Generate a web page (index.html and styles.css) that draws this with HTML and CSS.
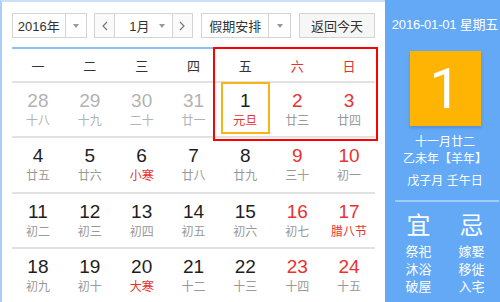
FILE: index.html
```html
<!DOCTYPE html>
<html lang="zh-CN">
<head>
    <meta charset="UTF-8">
    <title>万年历</title>
    <link rel="stylesheet" href="styles.css">
</head>
<body>

<div class="calendar">
    <div class="main">
        <div class="toolbar">
            <div class="select year">
                <span class="label">2016年</span>
                <span class="arrow"><i></i></span>
            </div>
            <div class="select month">
                <span class="nav"><svg width="6" height="10" viewBox="0 0 6 10"><path d="M5 1 L1 5 L5 9" fill="none" stroke="#777" stroke-width="1.2"/></svg></span>
                <span class="label">1月</span>
                <span class="arrow"><i></i></span>
                <span class="nav"><svg width="6" height="10" viewBox="0 0 6 10"><path d="M1 1 L5 5 L1 9" fill="none" stroke="#777" stroke-width="1.2"/></svg></span>
            </div>
            <div class="select holiday">
                <span class="label">假期安排</span>
                <span class="arrow"><i></i></span>
            </div>
            <div class="today-btn">返回今天</div>
        </div>

        <div class="grid">
            <div class="week">一</div>
            <div class="week">二</div>
            <div class="week">三</div>
            <div class="week">四</div>
            <div class="week">五</div>
            <div class="week red">六</div>
            <div class="week red">日</div>

            <div class="day other"><b>28</b><span>十八</span></div>
            <div class="day other"><b>29</b><span>十九</span></div>
            <div class="day other"><b>30</b><span>二十</span></div>
            <div class="day other"><b>31</b><span>廿一</span></div>
            <div class="day"><div class="selected"><b>1</b><span class="fest">元旦</span></div></div>
            <div class="day weekend"><b>2</b><span>廿三</span></div>
            <div class="day weekend"><b>3</b><span>廿四</span></div>

            <div class="day"><b>4</b><span>廿五</span></div>
            <div class="day"><b>5</b><span>廿六</span></div>
            <div class="day"><b>6</b><span class="fest">小寒</span></div>
            <div class="day"><b>7</b><span>廿八</span></div>
            <div class="day"><b>8</b><span>廿九</span></div>
            <div class="day weekend"><b>9</b><span>三十</span></div>
            <div class="day weekend"><b>10</b><span>初一</span></div>

            <div class="day"><b>11</b><span>初二</span></div>
            <div class="day"><b>12</b><span>初三</span></div>
            <div class="day"><b>13</b><span>初四</span></div>
            <div class="day"><b>14</b><span>初五</span></div>
            <div class="day"><b>15</b><span>初六</span></div>
            <div class="day weekend"><b>16</b><span>初七</span></div>
            <div class="day weekend"><b>17</b><span class="fest">腊八节</span></div>

            <div class="day"><b>18</b><span>初九</span></div>
            <div class="day"><b>19</b><span>初十</span></div>
            <div class="day"><b>20</b><span class="fest">大寒</span></div>
            <div class="day"><b>21</b><span>十二</span></div>
            <div class="day"><b>22</b><span>十三</span></div>
            <div class="day weekend"><b>23</b><span>十四</span></div>
            <div class="day weekend"><b>24</b><span>十五</span></div>

            <div class="highlight"></div>
        </div>
    </div>

    <div class="side">
        <div class="side-date">2016-01-01 星期五</div>
        <div class="big-day">1</div>
        <div class="lunar">十一月廿二</div>
        <div class="lunar">乙未年【羊年】</div>
        <div class="lunar ganzhi">戊子月 壬午日</div>
        <div class="side-line"></div>
        <div class="yiji">
            <div class="col">
                <div class="head">宜</div>
                <div>祭祀</div>
                <div>沐浴</div>
                <div>破屋</div>
            </div>
            <div class="col">
                <div class="head">忌</div>
                <div>嫁娶</div>
                <div>移徙</div>
                <div>入宅</div>
            </div>
        </div>
    </div>
</div>

</body>
</html>
```

FILE: styles.css
```css
body {
    margin: 0;
    font-family: "Liberation Sans", Arial, "Noto Sans CJK SC", sans-serif;
    background: #fff;
}
.calendar {
    display: flex;
    width: 500px;
    height: 302px;
    overflow: hidden;
}
.main {
    width: 385px;
    flex: none;
    box-sizing: border-box;
    padding: 11px 10px 0 10px;
    border-left: 2px solid #a9cff7;
    border-top: 2px solid #c9e0fa;
    background: #fff;
}
.toolbar {
    display: flex;
    height: 25px;
    padding-bottom: 9px;
    border-bottom: 2px solid #8ec1f6;
}
.select {
    display: flex;
    border: 1px solid #d4d4d4;
    box-sizing: border-box;
    height: 25px;
    font-size: 13px;
    color: #333;
    margin-right: 7px;
}
.select .label {
    display: flex;
    align-items: center;
    justify-content: center;
}
.select .arrow {
    display: flex;
    align-items: center;
    justify-content: center;
    border-left: 1px solid #d4d4d4;
    width: 21px;
}
.select .arrow i {
    width: 0;
    height: 0;
    border-left: 3px solid transparent;
    border-right: 3px solid transparent;
    border-top: 4px solid #999;
}
.year {
    width: 75px;
}
.year .label {
    width: 53px;
}
.month {
    width: 99px;
}
.month .label {
    width: 40px;
    padding-left: 6px;
}
.month .arrow {
    border-left: none;
    width: 10px;
}
.month .nav {
    display: flex;
    align-items: center;
    justify-content: center;
    width: 21px;
    background: #fafafa;
    border-left: 1px solid #d4d4d4;
}
.month .nav:first-child {
    border-left: none;
    border-right: 1px solid #d4d4d4;
}
.month .arrow + .nav {
    margin-left: 5px;
}
.holiday {
    width: 90px;
    margin-left: 1px;
}
.holiday .label {
    width: 68px;
}
.today-btn {
    width: 77px;
    height: 25px;
    box-sizing: border-box;
    border: 1px solid #d4d4d4;
    background: #f6f6f6;
    font-size: 13px;
    color: #333;
    display: flex;
    align-items: center;
    justify-content: center;
    margin-left: 1px;
}
.grid {
    position: relative;
    display: grid;
    grid-template-columns: repeat(7, 1fr);
    grid-template-rows: 34px repeat(4, 55.3px);
    width: 363px;
}
.week {
    display: flex;
    align-items: center;
    justify-content: center;
    font-size: 13px;
    color: #333;
    border-bottom: 2px solid #e2e2e2;
}
.week.red {
    color: #e8322f;
}
.day {
    display: flex;
    flex-direction: column;
    align-items: center;
    padding-top: 7px;
    box-sizing: border-box;
    border-bottom: 2px solid #e2e2e2;
}
.day:nth-last-child(-n+8) {
    border-bottom: none;
}
.day b {
    font-weight: normal;
    font-size: 19px;
    line-height: 22px;
    color: #1e1e1e;
}
.day span {
    font-size: 12px;
    line-height: 18px;
    color: #999;
}
.day span.fest {
    color: #e8322f;
}
.day.weekend b {
    color: #e8322f;
}
.day.other b,
.day.other span {
    color: #b3b3b3;
}
.day:has(.selected) {
    padding-top: 0;
}
.selected {
    display: flex;
    flex-direction: column;
    align-items: center;
    width: 49px;
    height: 52px;
    margin-top: -1px;
    box-sizing: border-box;
    border: 2px solid #fbb417;
    padding-top: 6px;
}
.highlight {
    position: absolute;
    left: 201px;
    top: -2px;
    width: 165px;
    height: 94px;
    box-sizing: border-box;
    border: 2px solid #f00;
}
.side {
    flex: 1;
    background: #63a9f6;
    color: #fff;
    padding-left: 5px;
    display: flex;
    flex-direction: column;
    align-items: center;
}
.side-date {
    font-size: 13px;
    letter-spacing: -0.2px;
    margin-top: 17px;
    line-height: 16px;
    white-space: nowrap;
}
.big-day {
    width: 71px;
    height: 75px;
    margin-top: 18px;
    background: #ffb404;
    font-size: 56px;
    font-weight: 400;
    font-family: Roboto, "Liberation Sans", sans-serif;
    display: flex;
    align-items: center;
    justify-content: center;
    box-shadow: 0 2px 3px rgba(0, 0, 0, 0.15);
}
.lunar {
    font-size: 12px;
    line-height: 17px;
    white-space: nowrap;
}
.big-day + .lunar {
    margin-top: 8px;
}
.ganzhi {
    margin-top: 5px;
}
.side-line {
    width: 104px;
    height: 2px;
    background: #a3cdf9;
    margin-top: 10px;
    margin-left: 4px;
}
.yiji {
    display: flex;
    margin-top: 9px;
}
.col {
    width: 53px;
    text-align: center;
    font-size: 13px;
    line-height: 17.5px;
}
.col .head {
    font-size: 24px;
    line-height: 30px;
    margin-bottom: 2px;
}
```
